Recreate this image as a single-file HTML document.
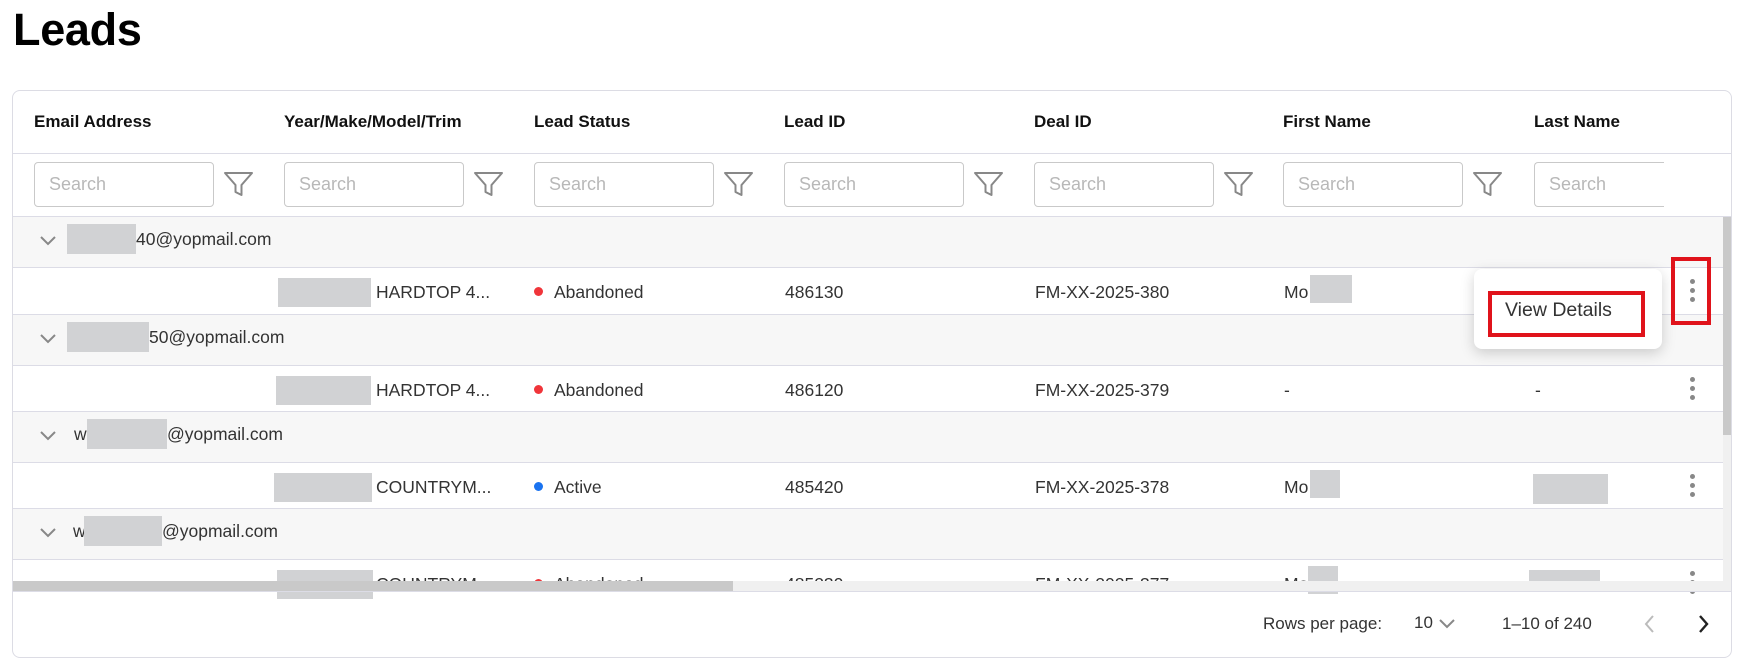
<!DOCTYPE html>
<html><head><meta charset="utf-8"><style>
*{box-sizing:border-box;margin:0;padding:0}
body{width:1744px;height:657px;overflow:hidden;background:#fff;font-family:"Liberation Sans",sans-serif;color:#333;position:relative}
.a{position:absolute}
h1{position:absolute;left:13px;top:4px;font-size:45px;font-weight:bold;color:#000;letter-spacing:-0.3px}
.card{position:absolute;left:12px;top:90px;width:1720px;height:568px;border:1px solid #dcdce4;border-radius:8px;overflow:hidden;background:#fff}
.th{font-size:17px;font-weight:bold;color:#111}
.inp{position:absolute;width:180px;height:45px;border:1px solid #c9c9c9;border-radius:4px;font-size:18px;color:#b8b8b8;padding:11px 14px}
.hl{position:absolute;left:0;width:1720px;height:1px;background:#dcdce6}
.grp{position:absolute;left:0;width:1710px;background:#f7f7f7}
.t{position:absolute;font-size:17.5px;color:#333;white-space:nowrap}
.g{position:absolute;background:#d1d2d4}
.dot{position:absolute;width:9px;height:9px;border-radius:50%}
.keb{position:absolute;width:5px}
.keb i{display:block;width:5px;height:5px;border-radius:50%;background:#888;margin-bottom:4px}
</style></head><body>
<h1>Leads</h1>
<div class="card">
<div class="a th" style="left:21px;top:21px">Email Address</div>
<div class="a th" style="left:271px;top:21px">Year/Make/Model/Trim</div>
<div class="a th" style="left:521px;top:21px">Lead Status</div>
<div class="a th" style="left:771px;top:21px">Lead ID</div>
<div class="a th" style="left:1021px;top:21px">Deal ID</div>
<div class="a th" style="left:1270px;top:21px">First Name</div>
<div class="a th" style="left:1521px;top:21px">Last Name</div>
<div class="hl" style="top:62px"></div>
<div class="inp" style="left:21px;top:71px">Search</div>
<div class="inp" style="left:271px;top:71px">Search</div>
<div class="inp" style="left:521px;top:71px">Search</div>
<div class="inp" style="left:771px;top:71px">Search</div>
<div class="inp" style="left:1021px;top:71px">Search</div>
<div class="inp" style="left:1270px;top:71px">Search</div>
<div class="inp" style="left:1521px;top:71px;width:130px;border-right:none;border-radius:4px 0 0 4px">Search</div>
<svg class="a" style="left:0;top:0" width="1720" height="140">
<g fill="none" stroke="#888" stroke-width="2" stroke-linejoin="round">
<path id="f" d="M212 82h27l-10.5 12v10l-6 -3v-7z"/>
<use href="#f" x="250"/><use href="#f" x="500"/><use href="#f" x="750"/><use href="#f" x="1000"/><use href="#f" x="1249"/>
</g></svg>
<div class="hl" style="top:125px"></div>
<div class="grp" style="top:126px;height:50px"></div>
<div class="hl" style="top:176px"></div>
<div class="hl" style="top:223px"></div>
<div class="grp" style="top:224px;height:50px"></div>
<div class="hl" style="top:274px"></div>
<div class="hl" style="top:320px"></div>
<div class="grp" style="top:321px;height:50px"></div>
<div class="hl" style="top:371px"></div>
<div class="hl" style="top:417px"></div>
<div class="grp" style="top:418px;height:50px"></div>
<div class="hl" style="top:468px"></div>
<svg class="a" style="left:0;top:0" width="80" height="500"><g fill="none" stroke="#888" stroke-width="2">
<path d="M28 146l7 7 7-7"/><path d="M28 244l7 7 7-7"/><path d="M28 341l7 7 7-7"/><path d="M28 438l7 7 7-7"/></g></svg>
<div class="g" style="left:54px;top:133px;width:69px;height:30px"></div>
<div class="t" style="left:123px;top:138px">40@yopmail.com</div>
<div class="g" style="left:265px;top:187px;width:93px;height:29px"></div>
<div class="t" style="left:363px;top:191px">HARDTOP 4...</div>
<div class="dot" style="left:521px;top:196px;background:#f0353a"></div>
<div class="t" style="left:541px;top:191px">Abandoned</div>
<div class="t" style="left:772px;top:191px">486130</div>
<div class="t" style="left:1022px;top:191px">FM-XX-2025-380</div>
<div class="t" style="left:1271px;top:191px">Mo</div>
<div class="g" style="left:1297px;top:184px;width:42px;height:28px"></div>
<div class="g" style="left:54px;top:231px;width:82px;height:30px"></div>
<div class="t" style="left:136px;top:236px">50@yopmail.com</div>
<div class="g" style="left:263px;top:285px;width:95px;height:29px"></div>
<div class="t" style="left:363px;top:289px">HARDTOP 4...</div>
<div class="dot" style="left:521px;top:294px;background:#f0353a"></div>
<div class="t" style="left:541px;top:289px">Abandoned</div>
<div class="t" style="left:772px;top:289px">486120</div>
<div class="t" style="left:1022px;top:289px">FM-XX-2025-379</div>
<div class="t" style="left:1271px;top:289px">-</div>
<div class="t" style="left:1522px;top:289px">-</div>
<div class="t" style="left:61px;top:333px">w</div>
<div class="g" style="left:74px;top:328px;width:80px;height:30px"></div>
<div class="t" style="left:154px;top:333px">@yopmail.com</div>
<div class="g" style="left:261px;top:382px;width:98px;height:29px"></div>
<div class="t" style="left:363px;top:386px">COUNTRYM...</div>
<div class="dot" style="left:521px;top:391px;background:#1a73f0"></div>
<div class="t" style="left:541px;top:386px">Active</div>
<div class="t" style="left:772px;top:386px">485420</div>
<div class="t" style="left:1022px;top:386px">FM-XX-2025-378</div>
<div class="t" style="left:1271px;top:386px">Mo</div>
<div class="g" style="left:1297px;top:379px;width:30px;height:28px"></div>
<div class="g" style="left:1520px;top:383px;width:75px;height:30px"></div>
<div class="t" style="left:60px;top:430px">w</div>
<div class="g" style="left:71px;top:425px;width:78px;height:30px"></div>
<div class="t" style="left:149px;top:430px">@yopmail.com</div>
<div class="g" style="left:264px;top:479px;width:96px;height:29px"></div>
<div class="t" style="left:363px;top:483px">COUNTRYM...</div>
<div class="dot" style="left:521px;top:488px;background:#f0353a"></div>
<div class="t" style="left:541px;top:483px">Abandoned</div>
<div class="t" style="left:772px;top:483px">485230</div>
<div class="t" style="left:1022px;top:483px">FM-XX-2025-377</div>
<div class="t" style="left:1271px;top:483px">Mo</div>
<div class="g" style="left:1295px;top:475px;width:30px;height:28px"></div>
<div class="g" style="left:1516px;top:479px;width:71px;height:18px"></div>
<div class="keb" style="left:1677px;top:188px"><i></i><i></i><i></i></div>
<div class="keb" style="left:1677px;top:286px"><i></i><i></i><i></i></div>
<div class="keb" style="left:1677px;top:383px"><i></i><i></i><i></i></div>
<div class="keb" style="left:1677px;top:480px"><i></i><i></i><i></i></div>
<div class="a" style="left:0;top:490px;width:1710px;height:10px;background:#f0f0f0"></div>
<div class="a" style="left:0;top:490px;width:720px;height:10px;background:#c9c9c9"></div>
<div class="hl" style="top:500px"></div>
<div class="a" style="left:1710px;top:126px;width:10px;height:374px;background:#f0f0f0"></div>
<div class="a" style="left:1710px;top:126px;width:10px;height:218px;background:#c9c9c9"></div>
<div class="t" style="left:1250px;top:523px;font-size:17px">Rows per page:</div>
<div class="t" style="left:1401px;top:522px;font-size:17px">10</div>
<svg class="a" style="left:1425px;top:526px" width="20" height="14"><path d="M2 3l7 7 7-7" fill="none" stroke="#888" stroke-width="2"/></svg>
<div class="t" style="left:1489px;top:523px;font-size:17px">1–10 of 240</div>
<svg class="a" style="left:1628px;top:522px" width="20" height="22"><path d="M12 3l-7 8 7 8" fill="none" stroke="#bbb" stroke-width="2"/></svg>
<svg class="a" style="left:1680px;top:522px" width="20" height="22"><path d="M7 3l7 8-7 8" fill="none" stroke="#222" stroke-width="2.4"/></svg>
</div>
<div class="a" style="left:1474px;top:269px;width:188px;height:80px;background:#fff;border-radius:8px;box-shadow:0 4px 14px rgba(0,0,0,0.18)"></div>
<div class="a" style="left:1488px;top:291px;width:157px;height:46px;border:4px solid #e0131b"></div>
<div class="t" style="left:1505px;top:299px;font-size:19.5px;color:#333">View Details</div>
<div class="a" style="left:1671px;top:257px;width:40px;height:68px;border:4px solid #e0131b"></div>
</body></html>
